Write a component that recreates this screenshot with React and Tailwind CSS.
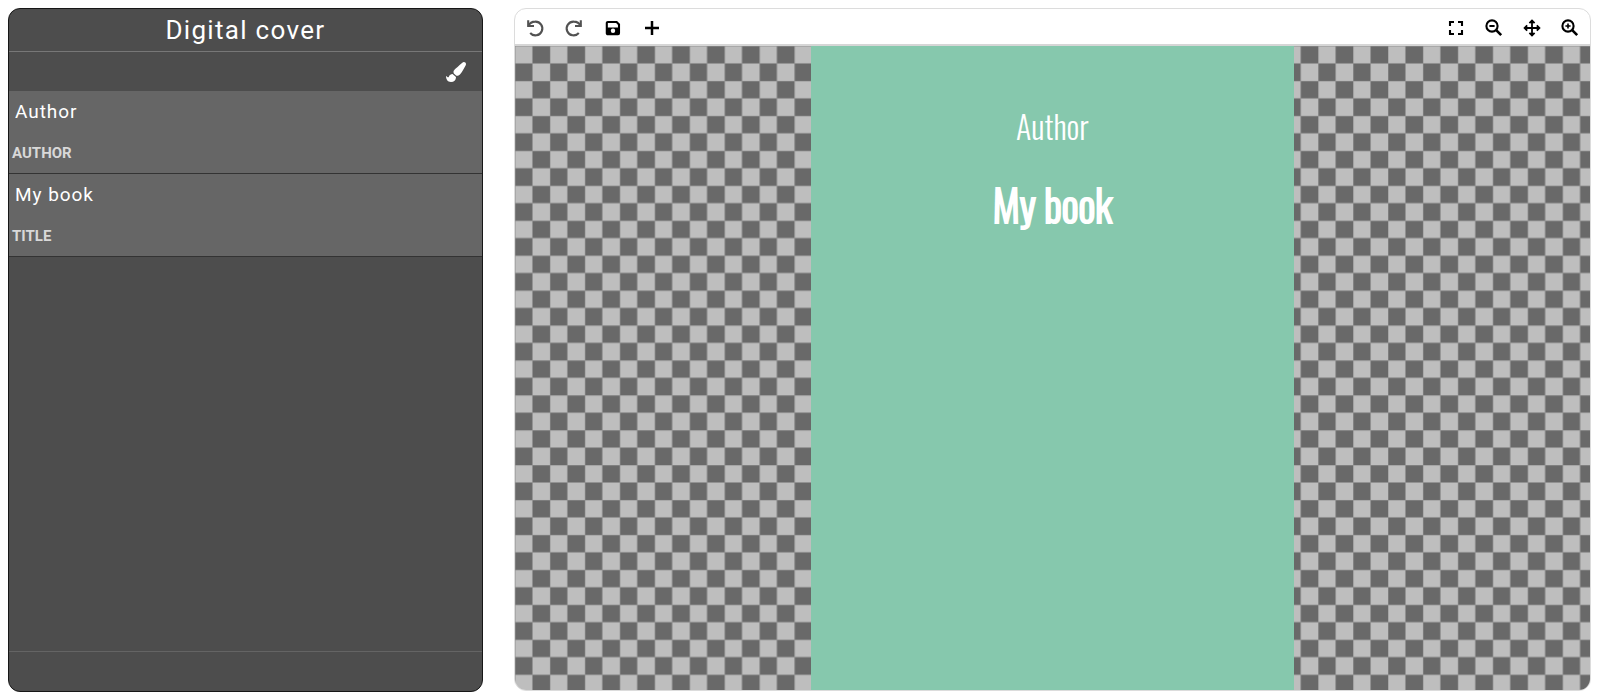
import { FaPaintBrush } from "react-icons/fa";

const layers = [
  { id: "author", label: "AUTHOR", value: "Author" },
  { id: "title", label: "TITLE", value: "My book" },
];

const icons = {
  undo: (
    <>
      <path d="M3.2 2.2V8H9" />
      <path d="M3.4 7.8C4.6 5.2 7.2 3.6 10.2 3.6a6.9 6.9 0 1 1-5 11.4" />
    </>
  ),
  redo: (
    <>
      <path d="M16.8 2.2V8H11" />
      <path d="M16.6 7.8C15.4 5.2 12.8 3.6 9.8 3.6a6.9 6.9 0 1 0 5 11.4" />
    </>
  ),
  save: (
    <>
      <path d="M4.8 4H13.6L16 6.4V15.2a1 1 0 0 1-1 1H4.8a1 1 0 0 1-1-1V5a1 1 0 0 1 1-1Z" />
      <path d="M4 9.4H16V16H4Z" fill="currentColor" stroke="none" />
      <circle cx="10" cy="12.8" r="2.2" fill="#ffffff" stroke="none" />
    </>
  ),
  add: <path d="M10 3V17M3 10H17" strokeWidth="2.5" />,
  full: <path d="M4 8V4H8M12 4H16V8M16 12V16H12M8 16H4V12" />,
  out: (
    <>
      <circle cx="8" cy="8" r="5.6" />
      <path d="M12.2 12.2L17.2 17.2" strokeWidth="2.6" />
      <path d="M5.4 8H10.6" strokeWidth="1.8" />
    </>
  ),
  in: (
    <>
      <circle cx="8" cy="8" r="5.6" />
      <path d="M12.2 12.2L17.2 17.2" strokeWidth="2.6" />
      <path d="M5.4 8H10.6M8 5.4V10.6" strokeWidth="1.6" />
    </>
  ),
  move: (
    <path
      d="M10 3V17M3 10H17M7.4 5.2L10 2.6L12.6 5.2M7.4 14.8L10 17.4L12.6 14.8M5.2 7.4L2.6 10L5.2 12.6M14.8 7.4L17.4 10L14.8 12.6"
      strokeWidth="1.8"
    />
  ),
};

function ToolButton({ label, icon, disabled }) {
  return (
    <button type="button" aria-label={label} disabled={disabled} className="text-black disabled:text-neutral-600">
      <svg viewBox="0 0 20 20" className="size-5" fill="none" stroke="currentColor" strokeWidth="2.1" aria-hidden="true">
        {icons[icon]}
      </svg>
    </button>
  );
}

function Checkerboard() {
  return (
    <svg className="absolute inset-0 size-full" aria-hidden="true">
      <defs>
        <pattern id="checker" width="34.92" height="34.92" patternUnits="userSpaceOnUse">
          <rect width="34.92" height="34.92" fill="#bebebe" />
          <rect x="17.46" width="17.46" height="17.46" fill="#696969" />
          <rect y="17.46" width="17.46" height="17.46" fill="#696969" />
          <path d="M0 17.46H34.92M17.46 0V34.92M0 0H34.92M0 0V34.92" stroke="#929292" strokeWidth="1" />
        </pattern>
      </defs>
      <rect width="100%" height="100%" fill="url(#checker)" />
    </svg>
  );
}

export default function App() {
  return (
    <main className="flex h-screen gap-[31px] bg-white pt-2 pr-[9px] pb-[7px] pl-2 font-['Roboto',sans-serif]">
      <aside className="flex w-[30%] shrink-0 flex-col overflow-hidden rounded-xl border border-neutral-900 bg-[#4d4d4d] text-white">
        <h1 className="border-b border-[#777777] py-1 text-center text-[26px] leading-[34px] tracking-wider">Digital cover</h1>
        <div className="flex h-[39px] items-center justify-end px-4">
          <button type="button" aria-label="Style">
            <FaPaintBrush className="size-5" />
          </button>
        </div>
        <div className="flex-1">
          {layers.map((layer) => (
            <div key={layer.id} className="flex flex-col-reverse border-b border-[#333333] bg-[#666666]">
              <label htmlFor={layer.id} className="px-[3px] pt-[9px] pb-2 text-[15px] leading-6 font-bold text-[#d8d8d8]">
                {layer.label}
              </label>
              <input
                id={layer.id}
                defaultValue={layer.value}
                className="h-[41px] w-full bg-transparent px-1.5 text-[19px] tracking-wider outline-none"
              />
            </div>
          ))}
        </div>
        <footer className="h-10 border-t border-[#646464]" />
      </aside>

      <section className="mb-px flex min-w-0 flex-1 flex-col overflow-hidden rounded-xl border border-[#dcdcdc]">
        <div className="flex h-[37px] shrink-0 items-center justify-between border-b-2 border-[#d6d6d6] px-2.5 pt-[3px]">
          <div className="flex gap-[19px]">
            <ToolButton label="Undo" icon="undo" disabled />
            <ToolButton label="Redo" icon="redo" disabled />
            <ToolButton label="Save" icon="save" />
            <ToolButton label="Add" icon="add" />
          </div>
          <div className="flex gap-[18px]">
            <ToolButton label="Full screen" icon="full" />
            <ToolButton label="Zoom out" icon="out" />
            <ToolButton label="Move" icon="move" />
            <ToolButton label="Zoom in" icon="in" />
          </div>
        </div>
        <div className="relative flex flex-1 justify-center">
          <Checkerboard />
          <div className="relative w-[45%] bg-[#86c8ad] pt-[58px] text-center font-['Oswald','Roboto_Condensed','Liberation_Sans_Narrow',sans-serif] text-white">
            <p className="text-[32px] leading-[44px] font-light">Author</p>
            <p className="mt-6 text-[42px] leading-[64px] font-light [-webkit-text-stroke:2px_white]">My book</p>
          </div>
        </div>
      </section>
    </main>
  );
}
